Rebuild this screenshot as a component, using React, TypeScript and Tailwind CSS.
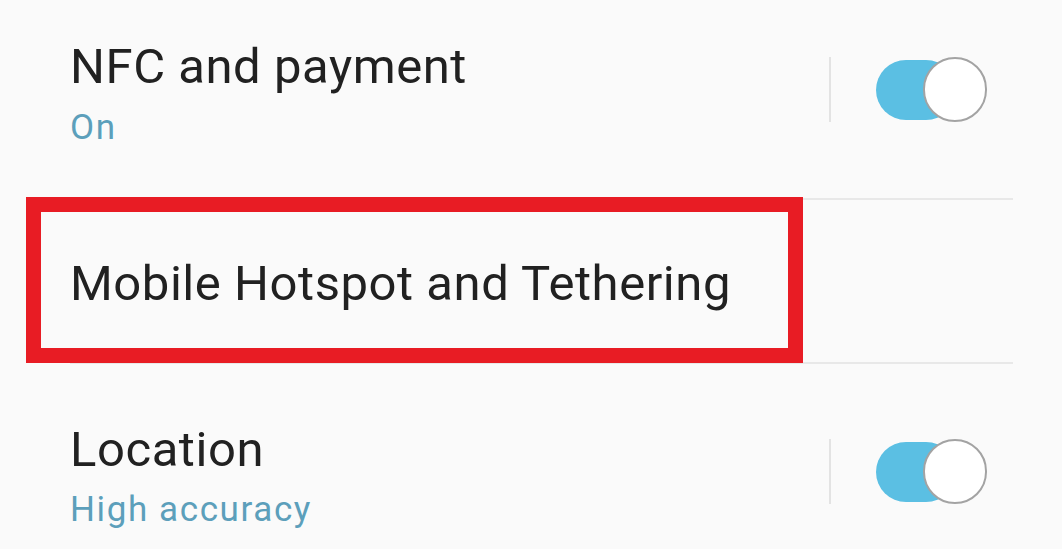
import React from "react";

function Toggle() {
  return (
    <div className="flex items-center">
      <div className="w-[2px] h-[65px] bg-[#e3e3e3]" />
      <div className="relative ml-[45px] w-[111px] h-[65px]">
        <div className="absolute left-0 top-[3px] w-[80px] h-[60px] rounded-full bg-[#5bbfe3]" />
        <div className="absolute left-[47px] top-0 w-[64px] h-[65px] rounded-full bg-white border-[2px] border-[#a3a3a3]" />
      </div>
    </div>
  );
}

function Divider() {
  return <div className="ml-[70px] w-[943px] h-[2px] bg-[#e8e8e8]" />;
}

export default function App() {
  return (
    <div
      className="relative w-[1062px] h-[549px] overflow-hidden bg-[#fafafa] text-[#212121]"
      style={{ fontFamily: "Roboto, 'Noto Sans', sans-serif" }}
    >
      {/* NFC row */}
      <div className="flex items-start h-[198px] pt-[42px] pl-[70px] pr-[75px]">
        <div className="flex-1">
          <div className="text-[49px] leading-none tracking-[0.55px]">NFC and payment</div>
          <div className="mt-[19px] text-[35px] leading-none tracking-[1.6px] text-[#5c9fbb]">On</div>
        </div>
        <div className="mt-[15px]">
          <Toggle />
        </div>
      </div>
      <Divider />

      {/* Hotspot row */}
      <div className="h-[162px] pt-[59px] pl-[70px]">
        <div className="text-[49px] leading-none tracking-[0.55px]">Mobile Hotspot and Tethering</div>
      </div>
      <Divider />

      {/* Location row */}
      <div className="flex items-start pt-[61px] pl-[70px] pr-[75px]">
        <div className="flex-1">
          <div className="text-[49px] leading-none tracking-[0.55px]">Location</div>
          <div className="mt-[18px] text-[35px] leading-none tracking-[1.6px] text-[#5c9fbb]">High accuracy</div>
        </div>
        <div className="mt-[14px]">
          <Toggle />
        </div>
      </div>

      {/* red highlight annotation */}
      <div className="absolute left-[26px] top-[197px] w-[777px] h-[166px] border-[15px] border-[#e81c24]" />
    </div>
  );
}
